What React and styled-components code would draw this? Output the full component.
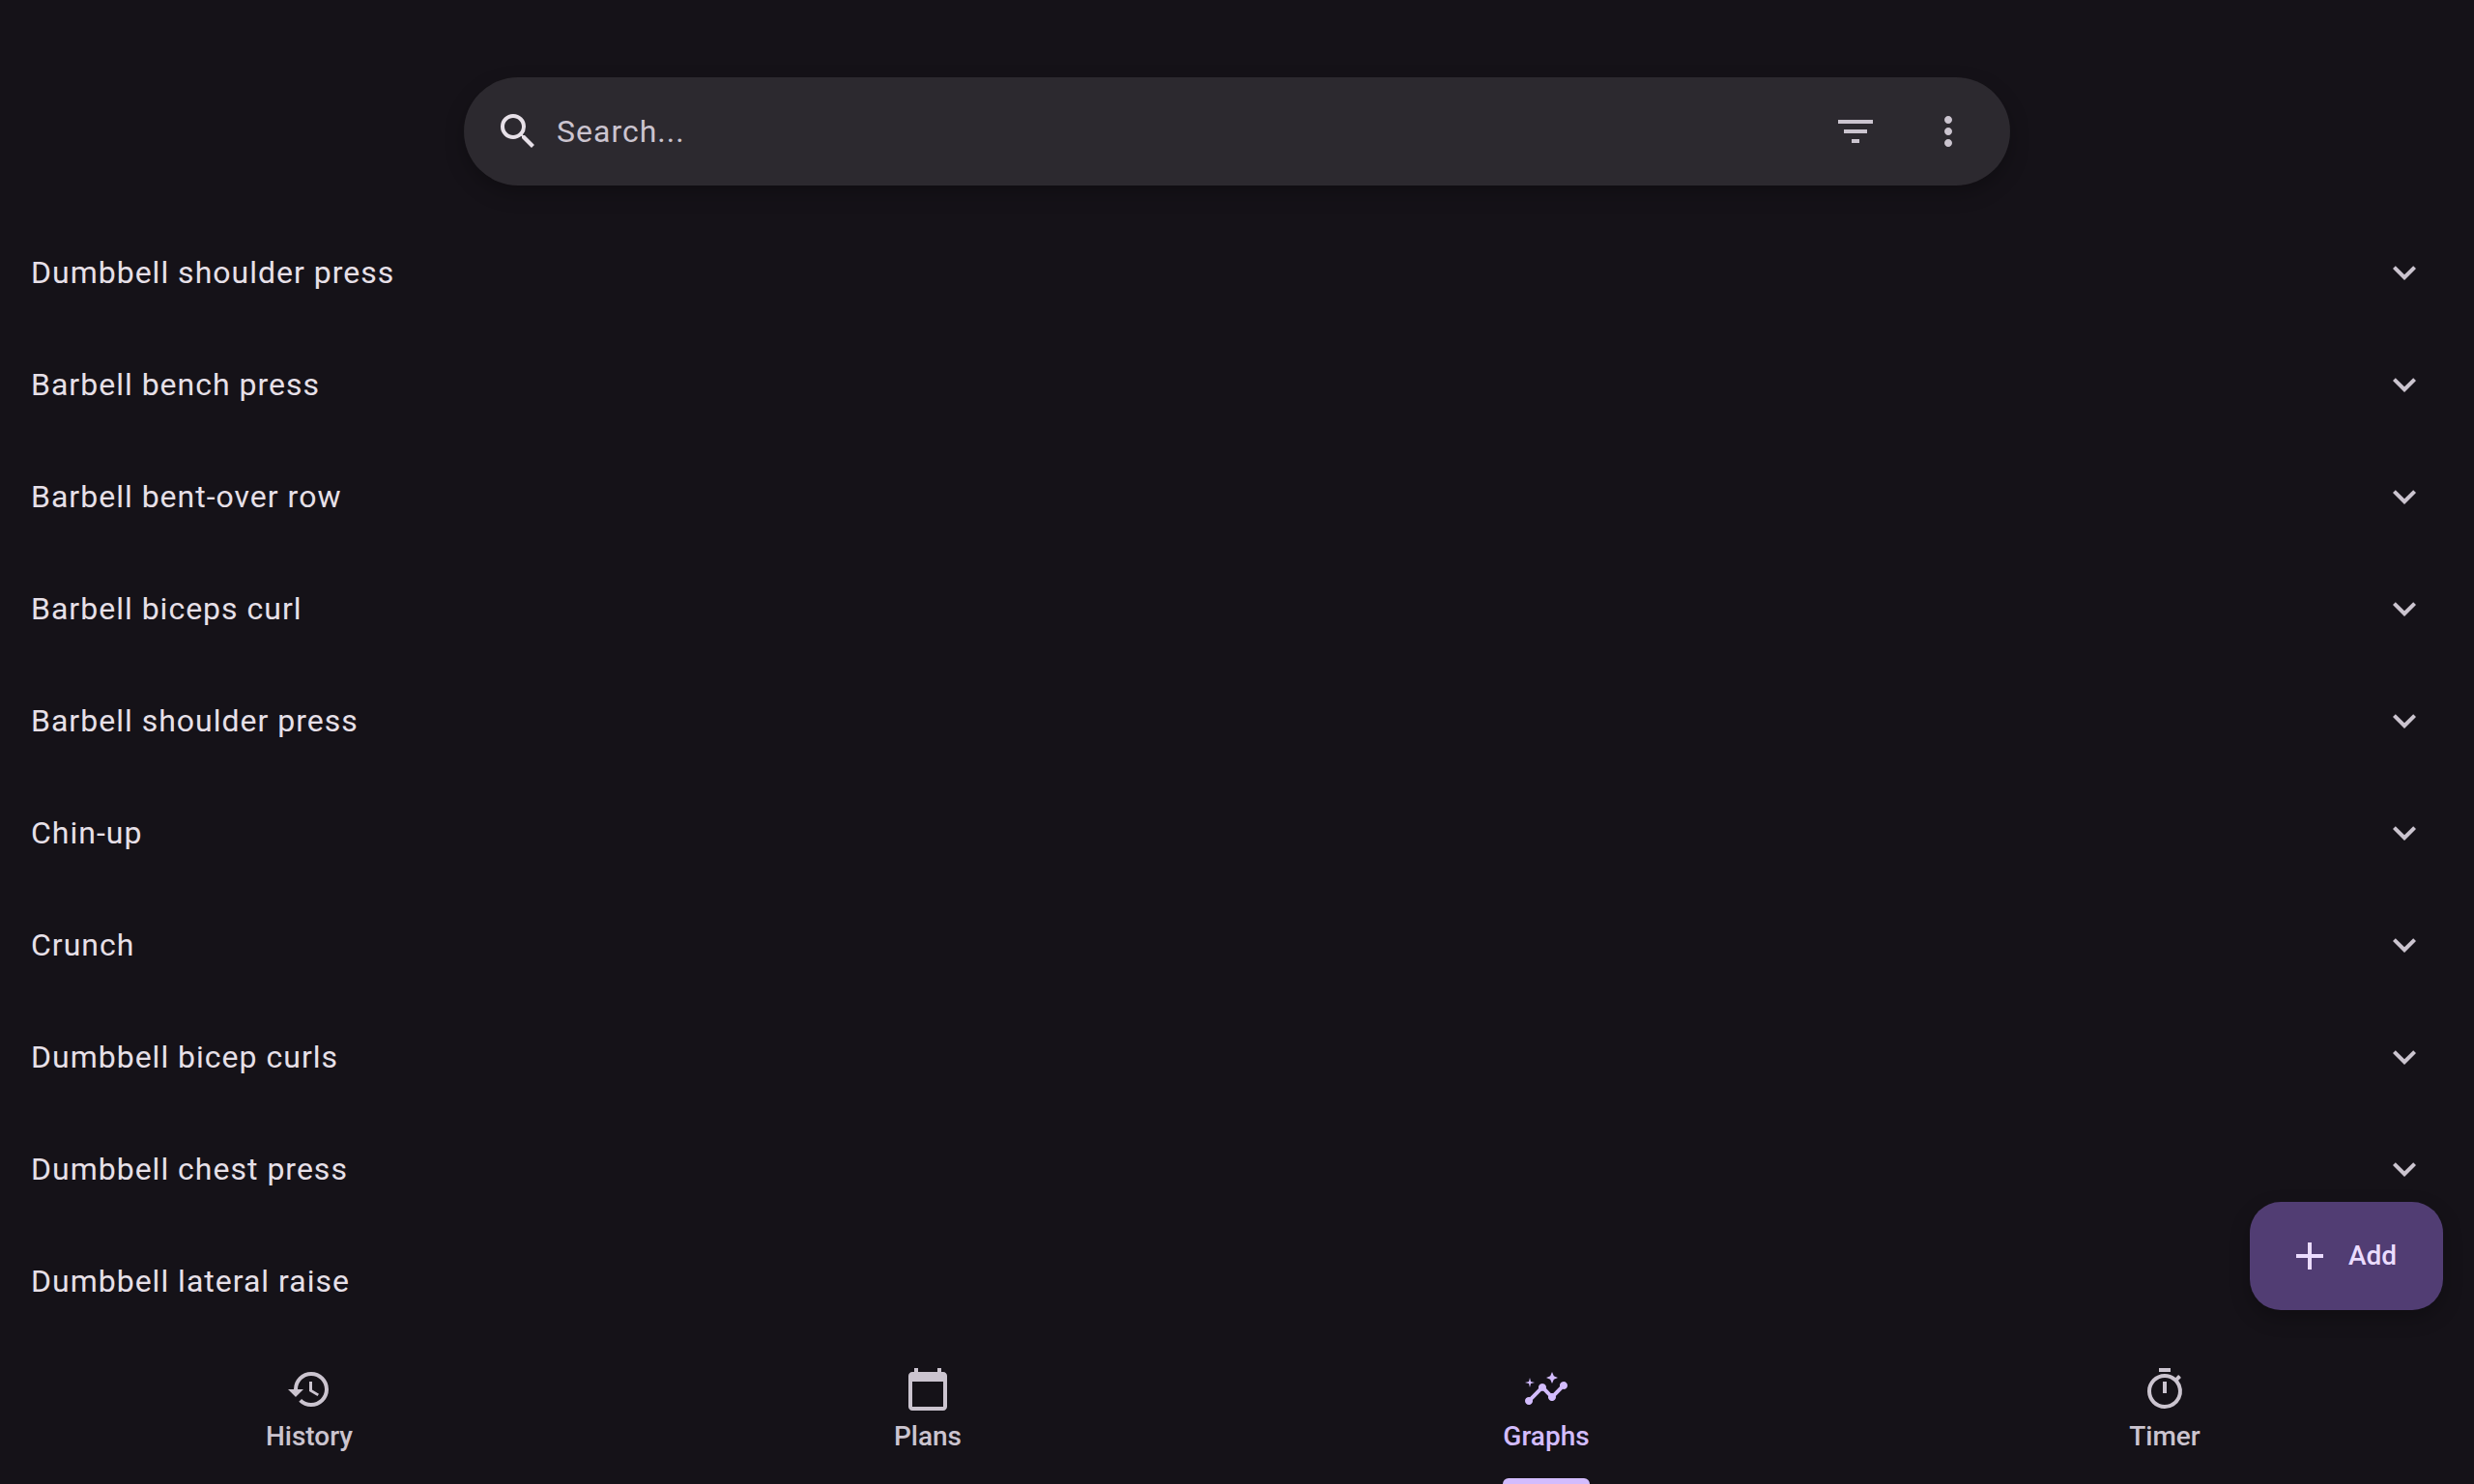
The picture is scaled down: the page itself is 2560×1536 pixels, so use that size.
import React from "react";
import styled, { createGlobalStyle } from "styled-components";
import {
  MdSearch,
  MdFilterList,
  MdMoreVert,
  MdExpandMore,
  MdAdd,
  MdHistory,
  MdCalendarToday,
  MdInsights,
  MdOutlineTimer,
} from "react-icons/md";

const color = {
  surface: "#151218",
  surfaceHigh: "#2c292f",
  onSurface: "#e7e0e8",
  onSurfaceVariant: "#cbc4cf",
  primary: "#d3bcfd",
  primaryContainer: "#513d73",
  onPrimaryContainer: "#ebdcff",
};

const GlobalStyle = createGlobalStyle`
  *, *::before, *::after { box-sizing: border-box; }
  body {
    margin: 0;
    background: ${color.surface};
    color: ${color.onSurface};
    font-family: Roboto, "Liberation Sans", sans-serif;
    font-size: 32px;
    line-height: 47px;
    letter-spacing: 1px;
  }
  button, input {
    margin: 0;
    padding: 0;
    border: 0;
    background: none;
    color: inherit;
    font: inherit;
    letter-spacing: inherit;
  }
  button { cursor: pointer; }
  svg { display: block; flex: none; width: 48px; height: 48px; }
`;

const Screen = styled.div`
  display: flex;
  flex-direction: column;
  height: 100vh;
`;

const Main = styled.main`
  position: relative;
  display: flex;
  flex: 1;
  flex-direction: column;
  min-height: 0;
  padding-top: 80px;
`;

const SearchBar = styled.form`
  display: flex;
  align-items: center;
  align-self: center;
  width: calc(100% - 64px);
  max-width: 1600px;
  height: 112px;
  flex: none;
  margin-bottom: 32px;
  padding: 0 16px 0 32px;
  border-radius: 56px;
  background: ${color.surfaceHigh};
  box-shadow: 0 8px 20px rgba(0, 0, 0, 0.25);
`;

const SearchLabel = styled.label`
  display: flex;
  flex: 1;
  align-items: center;
  gap: 16px;
`;

const SearchInput = styled.input`
  flex: 1;
  min-width: 0;
  outline: none;
  &::placeholder { color: ${color.onSurfaceVariant}; opacity: 1; }
`;

const IconButton = styled.button`
  display: grid;
  place-items: center;
  width: 96px;
  height: 96px;
  border-radius: 50%;
  color: ${color.onSurfaceVariant};
`;

const ExerciseList = styled.ul`
  flex: 1;
  min-height: 0;
  margin: 0;
  padding: 0;
  overflow: hidden;
  list-style: none;
`;

const ExerciseRow = styled.button`
  display: flex;
  align-items: center;
  justify-content: space-between;
  width: 100%;
  height: 116px;
  padding: 0 48px 0 32px;
  text-align: left;
  svg { color: ${color.onSurfaceVariant}; }
`;

const AddButton = styled.button`
  position: absolute;
  right: 32px;
  bottom: 28px;
  display: flex;
  align-items: center;
  gap: 16px;
  height: 112px;
  min-width: 200px;
  padding: 0 38px;
  border-radius: 32px;
  background: ${color.primaryContainer};
  color: ${color.onPrimaryContainer};
  font-size: 28px;
  font-weight: 500;
  line-height: 50px;
  letter-spacing: normal;
  box-shadow: 0 8px 20px rgba(0, 0, 0, 0.25);
`;

const TabBar = styled.nav`
  display: grid;
  grid-template-columns: repeat(4, 1fr);
  height: 152px;
  flex: none;
`;

const Tab = styled.a`
  display: flex;
  flex-direction: column;
  align-items: center;
  padding-top: 30px;
  color: ${(p) => (p.$active ? color.primary : color.onSurfaceVariant)};
  font-size: 28px;
  font-weight: 500;
  line-height: 50px;
  letter-spacing: normal;
  text-decoration: none;
`;

const TabLabel = styled.span`
  display: flex;
  flex: 1;
  flex-direction: column;
  justify-content: space-between;
  &::after {
    content: "";
    height: 6px;
    border-radius: 6px 6px 0 0;
    background: ${(p) => (p.$active ? color.primary : "transparent")};
  }
`;

const exercises = [
  "Dumbbell shoulder press",
  "Barbell bench press",
  "Barbell bent-over row",
  "Barbell biceps curl",
  "Barbell shoulder press",
  "Chin-up",
  "Crunch",
  "Dumbbell bicep curls",
  "Dumbbell chest press",
  "Dumbbell lateral raise",
];

const tabs = [
  { name: "History", Icon: MdHistory },
  { name: "Plans", Icon: MdCalendarToday },
  { name: "Graphs", Icon: MdInsights },
  { name: "Timer", Icon: MdOutlineTimer },
];

export default function App() {
  return (
    <Screen>
      <GlobalStyle />
      <Main>
        <SearchBar role="search" onSubmit={(e) => e.preventDefault()}>
          <SearchLabel>
            <MdSearch aria-hidden="true" />
            <SearchInput type="text" placeholder="Search..." aria-label="Search" />
          </SearchLabel>
          <IconButton type="button" aria-label="Filter">
            <MdFilterList />
          </IconButton>
          <IconButton type="button" aria-label="More options">
            <MdMoreVert />
          </IconButton>
        </SearchBar>
        <ExerciseList>
          {exercises.map((name) => (
            <li key={name}>
              <ExerciseRow type="button" aria-expanded="false">
                {name}
                <MdExpandMore aria-hidden="true" />
              </ExerciseRow>
            </li>
          ))}
        </ExerciseList>
        <AddButton type="button">
          <MdAdd aria-hidden="true" />
          Add
        </AddButton>
      </Main>
      <TabBar>
        {tabs.map(({ name, Icon }) => {
          const active = name === "Graphs";
          return (
            <Tab
              key={name}
              href={`#${name.toLowerCase()}`}
              $active={active}
              aria-current={active ? "page" : undefined}
            >
              <Icon aria-hidden="true" />
              <TabLabel $active={active}>{name}</TabLabel>
            </Tab>
          );
        })}
      </TabBar>
    </Screen>
  );
}
